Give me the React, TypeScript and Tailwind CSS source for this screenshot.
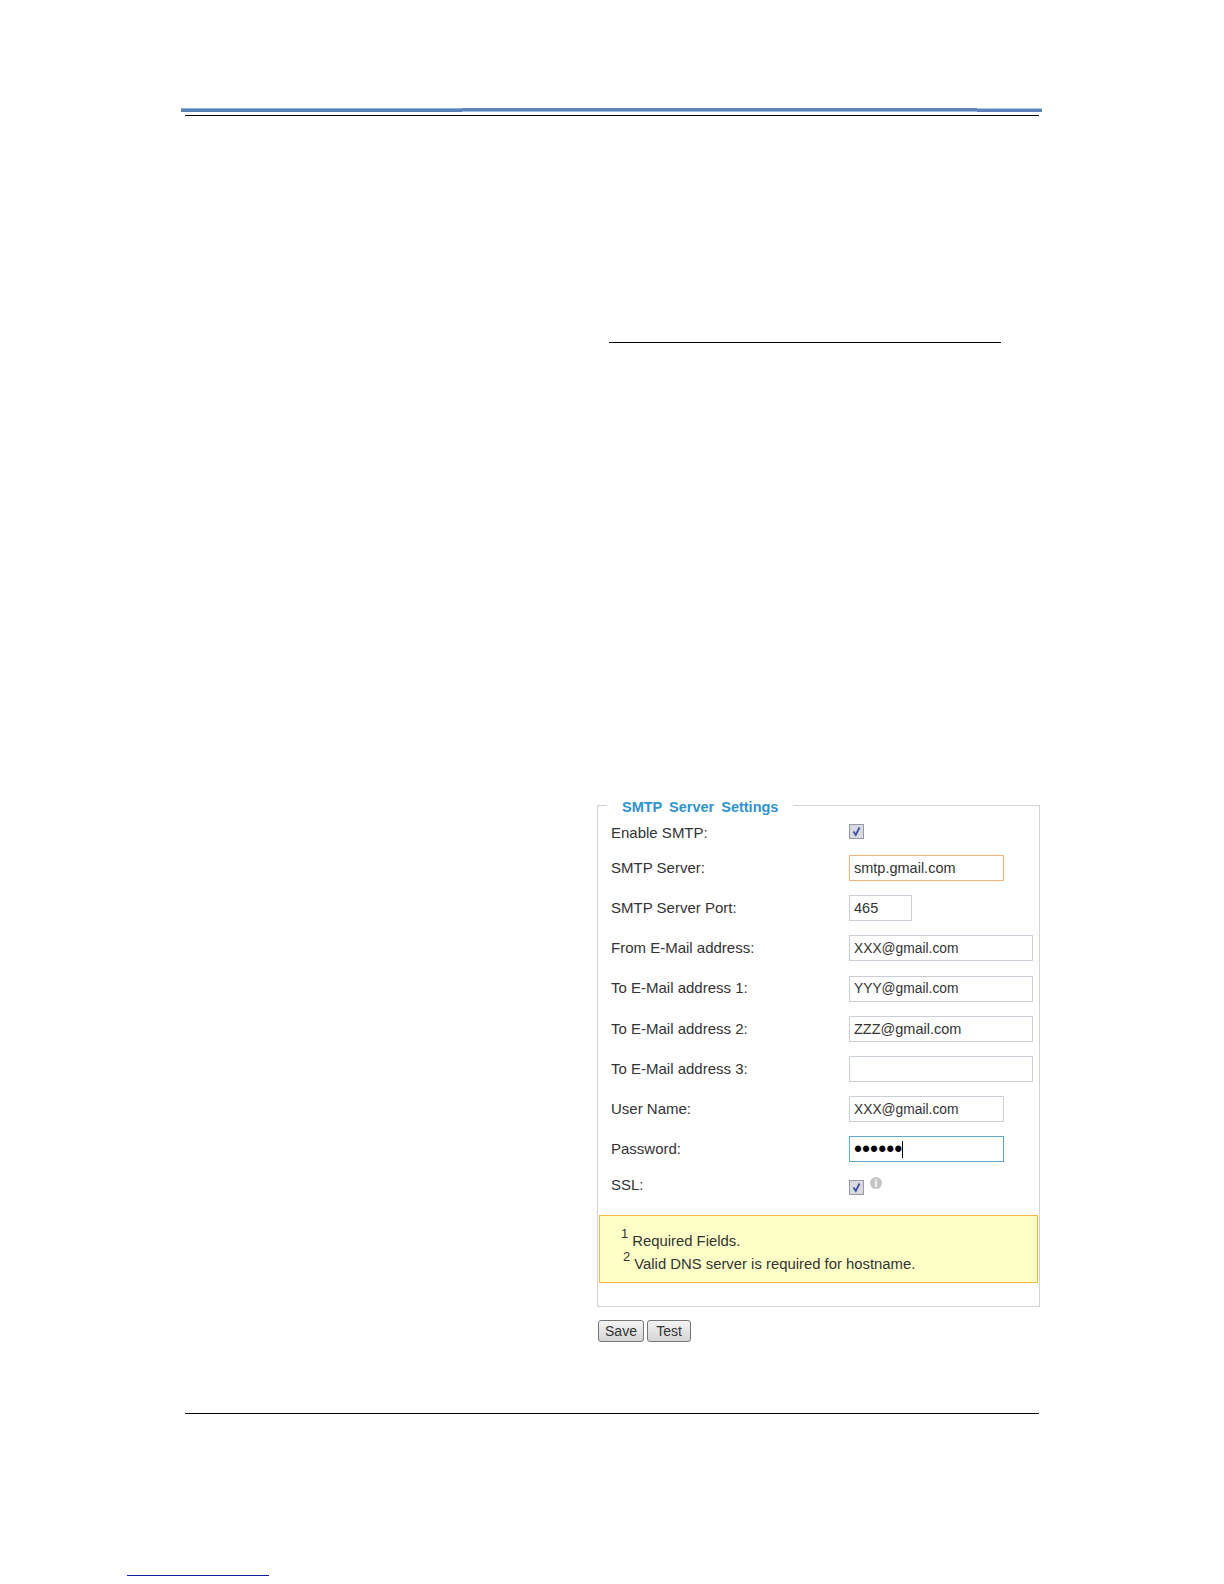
import React from 'react';

const font = "font-['Liberation_Sans',Arial,sans-serif]";

const Field = ({
  label,
  value,
  width,
  border = 'border-[#c9cfd9]',
  size = 'text-[14.5px]',
}: {
  label: string;
  value?: string;
  width: string;
  border?: string;
  size?: string;
}) => (
  <div className="flex h-[26px] items-center mb-[14.2px]">
    <div className="w-[238px] text-[15px] text-[#333]">{label}</div>
    <div className={`h-[26px] ${width} border-[1.5px] ${border} pl-[4px] pt-[2px] flex items-center ${size} text-[#333] bg-white`}>
      {value}
    </div>
  </div>
);

const Check = () => (
  <div className="w-[15px] h-[15px] border border-[#9a9aa2] bg-[#d9d9e4] flex items-center justify-center">
    <svg width="11" height="11" viewBox="0 0 11 11" fill="none">
      <path d="M2.5 5.5 L4.8 9 L8.5 1.5" stroke="#3f4f9f" strokeWidth="1.8" />
    </svg>
  </div>
);

const App = () => {
  return (
    <div className={`${font} bg-white w-[1224px] h-[1584px] overflow-hidden`}>
      {/* header rule, three scanned segments */}
      <div className="pt-[108px] pl-[181px] w-[1042px]">
        <div className="flex h-[4px]">
          <div className="w-[281px] border-t border-[#8fb0d8] bg-[#5a82b4]" />
          <div className="w-[515px] border-b border-[#9dbbe0] bg-[#5f83bb]" />
          <div className="flex-1 border-t-[1.5px] border-[#a9c8ea] bg-[#5f83bb]" />
        </div>
        <div className="h-px bg-black mt-[3px] ml-[4px] mr-[3px]" />
      </div>

      {/* lone underline */}
      <div className="h-px bg-black w-[392px] ml-[609px] mt-[226px]" />

      {/* smtp panel */}
      <div className="ml-[597px] w-[443px] mt-[462px]">
        <div className="relative border-[1.5px] border-[#d4d4d4] h-[502px] pt-[11px]">
          <div className="absolute left-[9px] -top-[8px] bg-white px-[15px] h-[20px] flex items-center text-[14.5px] font-bold text-[#2f93d2] [word-spacing:3px]">
            SMTP Server Settings
          </div>

          <div className="pl-[13px]">
            <div className="flex items-center h-[20px] mt-[4px] mb-[14px]">
              <div className="w-[238px] mt-[4px] text-[15px] text-[#333]">Enable SMTP:</div>
              <Check />
            </div>
            <Field label="SMTP Server:" value="smtp.gmail.com" width="w-[155px]" border="border-[#f5b27a]" />
            <Field label="SMTP Server Port:" value="465" width="w-[63px]" />
            <Field label="From E-Mail address:" value="XXX@gmail.com" width="w-[184px]" size="text-[13.8px]" />
            <Field label="To E-Mail address 1:" value="YYY@gmail.com" width="w-[184px]" size="text-[13.8px]" />
            <Field label="To E-Mail address 2:" value="ZZZ@gmail.com" width="w-[184px]" />
            <Field label="To E-Mail address 3:" width="w-[184px]" />
            <Field label="User Name:" value="XXX@gmail.com" width="w-[155px]" size="text-[13.8px]" />
            <div className="flex h-[26px] items-center mb-[13px]">
              <div className="w-[238px] text-[15px] text-[#333]">Password:</div>
              <div className="h-[26px] w-[155px] border-[1.5px] border-[#63a9cf] pl-[4px] flex items-center text-[23px] leading-none text-black">
                ••••••
                <span className="w-px h-[17px] bg-black" />
              </div>
            </div>
            <div className="flex h-[20px] items-center">
              <div className="w-[238px] text-[15px] text-[#333]">SSL:</div>
              <div className="mt-[4px]">
                <Check />
              </div>
              <div className="ml-[6px] -mt-[4px] w-[12px] h-[12px] rounded-full bg-[#c4c4c4] text-white text-[10px] font-bold flex items-center justify-center">
                i
              </div>
            </div>
          </div>

          <div className="mt-[20px] mx-[1px] h-[68px] border-[1.5px] border-[#f5b642] bg-[#ffffc8] pl-[21px] pt-[8px] text-[14.85px] text-[#333]">
            <div className="h-[23px] flex items-start">
              <sup className="text-[13px] mt-[10px] mr-[4px] static">1</sup>
              <span className="mt-[6px]">Required Fields.</span>
            </div>
            <div className="h-[23px] flex items-start">
              <sup className="text-[13px] mt-[10px] ml-[2px] mr-[4px] static">2</sup>
              <span className="mt-[6px]">Valid DNS server is required for hostname.</span>
            </div>
          </div>
        </div>

        <div className="flex gap-[3px] mt-[13px] ml-[1px]">
          <div className="w-[46px] h-[22px] rounded-[3px] border border-[#777] bg-gradient-to-b from-[#f4f4f4] to-[#d4d4d4] text-[14px] text-[#333] flex items-center justify-center">
            Save
          </div>
          <div className="w-[44px] h-[22px] rounded-[3px] border border-[#777] bg-gradient-to-b from-[#f4f4f4] to-[#d4d4d4] text-[14px] text-[#333] flex items-center justify-center">
            Test
          </div>
        </div>
      </div>

      {/* footer rule */}
      <div className="h-px bg-black ml-[185px] w-[854px] mt-[71px]" />

      {/* footnote rule */}
      <div className="h-px bg-[#10209a] ml-[127px] w-[142px] mt-[161px]" />
    </div>
  );
};

export default App;
